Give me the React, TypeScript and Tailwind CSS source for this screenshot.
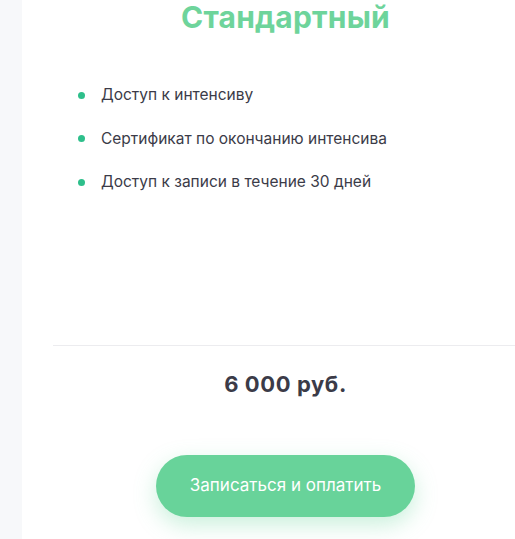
import { ReactNode } from 'react'

const пункты = ['Доступ к интенсиву', 'Сертификат по окончанию интенсива', 'Доступ к записи в течение 30 дней']

function Пункт({ children }: { children: ReactNode }) {
  return (
    <li className="flex items-center gap-[16px] h-[20px]">
      <span className="w-[7px] h-[7px] rounded-full bg-[#2ebf8b] shrink-0" />
      <span>{children}</span>
    </li>
  )
}

export default function App() {
  return (
    <div className="flex h-[539px] w-[515px] overflow-hidden bg-white font-['Inter',sans-serif]">
      <div className="w-[22px] shrink-0 bg-[#f7f8fa]" />
      <div className="flex flex-1 flex-col">
        <h2 className="mt-0 pl-[34px] text-center text-[30px] font-bold leading-[34px] tracking-[0.2px] text-[#6ed49b]">
          Стандартный
        </h2>
        <ul className="mt-[51px] flex flex-col gap-[23.5px] pl-[56px] text-[15.5px] text-[#3b3b48]">
          {пункты.map((p) => (
            <Пункт key={p}>{p}</Пункт>
          ))}
        </ul>
        <div className="ml-[31px] mt-[153px] border-t border-[#ececef]" />
        <div className="mt-[24px] pl-[34px] text-center text-[22px] font-bold leading-[28px] tracking-[0.6px] text-[#3b3b48]">6 000 руб.</div>
        <div className="mt-[57px] flex pl-[134px]">
          <button className="h-[62px] w-[259px] rounded-full bg-[#68d39a] text-[17px] text-white shadow-[0_8px_22px_rgba(104,211,154,0.35)]">
            Записаться и оплатить
          </button>
        </div>
      </div>
    </div>
  )
}
